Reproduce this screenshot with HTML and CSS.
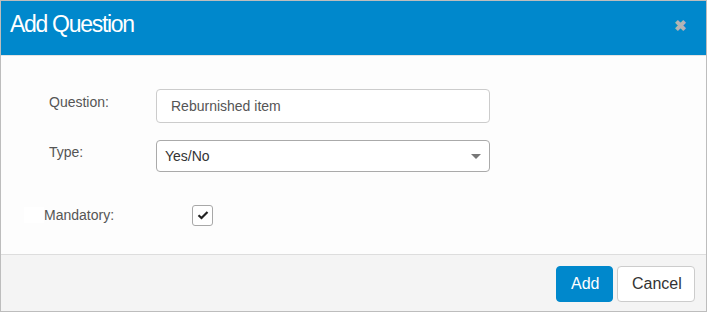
FILE: index.html
```html
<!DOCTYPE html>
<html>
<head>
<meta charset="utf-8">
<link rel="stylesheet" href="styles.css">
</head>
<body>
<div class="modal">
  <div class="modal-header">
    <h1 class="title">Add Question</h1>
    <span class="close">&#x2716;</span>
  </div>
  <div class="modal-body">
    <div class="row row-question">
      <label class="label">Question:</label>
      <div class="input">Reburnished item</div>
    </div>
    <div class="row row-type">
      <label class="label">Type:</label>
      <div class="select">Yes/No<span class="caret"></span></div>
    </div>
    <div class="row row-mandatory">
      <span class="blank"></span>
      <label class="label label-m">Mandatory:</label>
      <span class="checkbox">
        <svg width="12" height="10" viewBox="0 0 12 10"><path d="M1.5 5.2 L4.5 8 L10.5 2" fill="none" stroke="#222" stroke-width="2.2"/></svg>
      </span>
    </div>
  </div>
  <div class="modal-footer">
    <button class="btn btn-primary">Add</button>
    <button class="btn btn-default">Cancel</button>
  </div>
</div>
</body>
</html>
```
FILE: styles.css
```css
* { box-sizing: border-box; }
html, body { margin: 0; padding: 0; }
body { font-family: "Liberation Sans", Arial, sans-serif; background: #fff; }
.modal {
  width: 707px; height: 312px;
  border: 1px solid #bdbdbd;
  display: flex; flex-direction: column;
  background: #fdfdfd;
}
.modal-header {
  height: 55px;
  background: #0088cc;
  border-bottom: 1px solid #e3e3e3;
  display: flex; align-items: center; justify-content: space-between;
  padding: 0 19px 0 9px;
}
.title {
  margin: 0; color: #fff; font-weight: normal;
  font-size: 23px; letter-spacing: -1.3px;
  padding-bottom: 7px;
}
.close { color: #b4b4b4; font-size: 15px; font-weight: bold; padding-bottom: 5px; }
.modal-body {
  flex: 1;
  padding: 33px 0 0 0;
}
.row { display: flex; align-items: center; }
.label { color: #555; font-size: 14px; box-sizing: content-box; width: 107px; padding-left: 48px; flex: none; }
.row-question { height: 34px; }
.row-question .label { padding-bottom: 9px; }
.input {
  width: 334px; height: 34px;
  border: 1px solid #ccc; border-radius: 4px;
  background: #fff;
  padding: 0 14px; line-height: 32px;
  font-size: 14px; color: #555;
}
.row-type { margin-top: 17px; height: 32px; }
.row-type .label { padding-bottom: 9px; }
.select {
  width: 334px; height: 32px;
  border: 1px solid #aaa; border-radius: 4px;
  background: #fff; position: relative;
  padding: 0 8px; line-height: 30px;
  font-size: 14px; color: #333;
}
.caret {
  position: absolute; right: 8px; top: 13px;
  border-left: 5px solid transparent; border-right: 5px solid transparent;
  border-top: 5px solid #777;
}
.row-mandatory { margin-top: 32px; height: 22px; }
.blank { width: 20px; height: 16px; background: #fff; margin-left: 23px; flex: none; }
.label-m { padding-left: 0; width: 148px; }
.checkbox {
  width: 21px; height: 21px;
  border: 1px solid #a8a8a8; border-radius: 3px; background: #fff;
  display: flex; align-items: center; justify-content: center;
}
.modal-footer {
  height: 57px;
  background: #f4f4f4;
  border-top: 1px solid #ddd;
  display: flex; align-items: center; justify-content: flex-end;
  padding: 2px 11px 0 0; gap: 4px;
}
.btn {
  height: 36px; border-radius: 4px;
  font-family: "Liberation Sans", Arial, sans-serif;
  font-size: 16px; padding: 0 14px;
}
.btn-primary { background: #0088cc; color: #fff; border: 1px solid #0088cc; width: 57px; }
.btn-default { background: #fff; color: #333; border: 1px solid #ccc; width: 78px; }
```
